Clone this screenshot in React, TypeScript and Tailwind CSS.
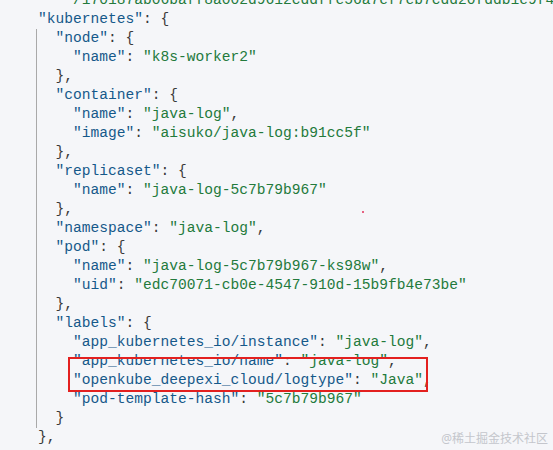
import React from "react";

type Tok = { t: string; c?: "k" | "s" | "p" };

const K = (t: string): Tok => ({ t: `"${t}"`, c: "k" });
const S = (t: string): Tok => ({ t: `"${t}"`, c: "s" });
const P = (t: string): Tok => ({ t, c: "p" });

function Line({ indent, toks }: { indent: number; toks: Tok[] }) {
  return (
    <div className="h-[19px] leading-[19px] whitespace-pre">
      {" ".repeat(indent)}
      {toks.map((tk, i) => (
        <span
          key={i}
          className={
            tk.c === "k"
              ? "text-[#15598a]"
              : tk.c === "s"
              ? "text-[#237a3c]"
              : "text-[#3a3a3a]"
          }
        >
          {tk.t}
        </span>
      ))}
    </div>
  );
}

// key: "value" pair
const kv = (indent: number, k: string, v: string, comma = false) => (
  <Line indent={indent} toks={[K(k), P(": "), S(v), ...(comma ? [P(",")] : [])]} />
);
const open = (indent: number, k: string) => <Line indent={indent} toks={[K(k), P(": {")]} />;
const close = (indent: number, comma = true) => <Line indent={indent} toks={[P(comma ? "}," : "}")]} />;

export default function App() {
  return (
    <div className="relative w-[553px] h-[450px] overflow-hidden bg-[#f5f6f9]">
      <div
        className="-mt-[9.5px] pl-[3px] text-[14.58px] text-[#3a3a3a]"
        style={{ fontFamily: '"Liberation Mono", "DejaVu Sans Mono", monospace' }}
      >
        <Line indent={8} toks={[{ t: "/170187ab06baff8a002d9612cddffe56a7ef7eb7cdd20fddb1e9f4", c: "s" }]} />
        {open(4, "kubernetes")}
        {/* children of kubernetes, with the indent guide */}
        <div className="ml-[33px] border-l border-[#a9a9a9] pl-[1px]">
          {open(2, "node")}
          {kv(4, "name", "k8s-worker2")}
          {close(2)}
          {open(2, "container")}
          {kv(4, "name", "java-log", true)}
          {kv(4, "image", "aisuko/java-log:b91cc5f")}
          {close(2)}
          {open(2, "replicaset")}
          {kv(4, "name", "java-log-5c7b79b967")}
          {close(2)}
          {kv(2, "namespace", "java-log", true)}
          {open(2, "pod")}
          {kv(4, "name", "java-log-5c7b79b967-ks98w", true)}
          {kv(4, "uid", "edc70071-cb0e-4547-910d-15b9fb4e73be")}
          {close(2)}
          {open(2, "labels")}
          {kv(4, "app_kubernetes_io/instance", "java-log", true)}
          {kv(4, "app_kubernetes_io/name", "java-log", true)}
          {kv(4, "openkube_deepexi_cloud/logtype", "Java", true)}
          {kv(4, "pod-template-hash", "5c7b79b967")}
          {close(2, false)}
        </div>
        {close(4)}
      </div>

      {/* annotation box */}
      <div className="absolute left-[68px] top-[357px] w-[360px] h-[35px] border-2 border-[#e3201f]" />
      {/* stray dot */}
      <div className="absolute left-[362px] top-[211px] w-[2px] h-[2px] rounded-full bg-[#e0305a]" />

      <div
        className="absolute right-[5px] top-[431px] text-[12px] leading-[16px] text-[#c4c6cc]"
        style={{ fontFamily: '"Noto Sans", "Noto Sans CJK SC", sans-serif' }}
      >
        @稀土掘金技术社区
      </div>
    </div>
  );
}
